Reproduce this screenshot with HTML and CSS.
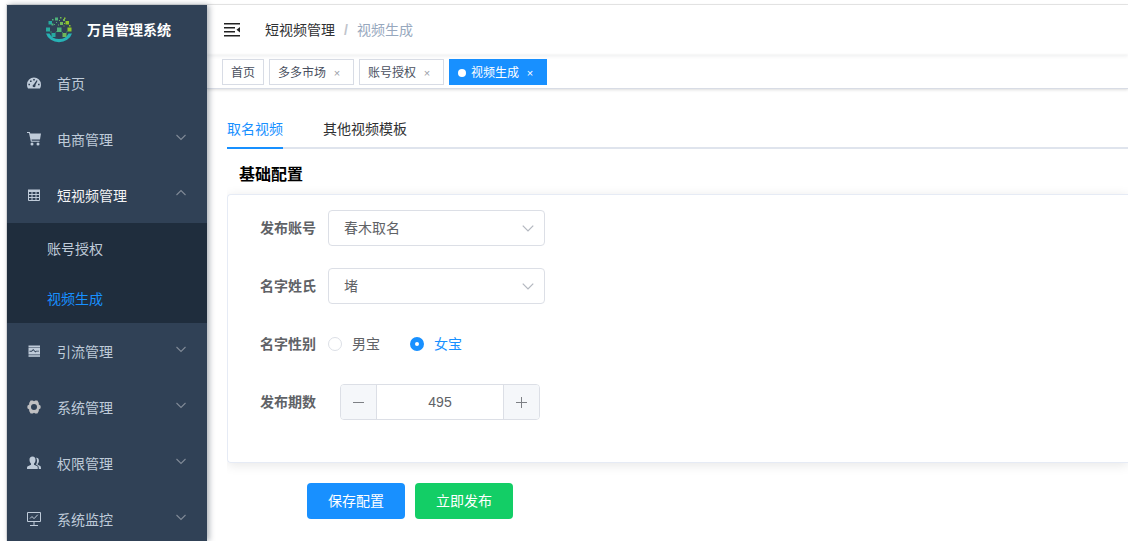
FILE: index.html
```html
<!DOCTYPE html>
<html lang="zh-CN">
<head>
<meta charset="utf-8">
<title>万自管理系统</title>
<link rel="stylesheet" href="styles.css">
</head>
<body>
<svg class="sprite" aria-hidden="true">
  <symbol id="chevron" viewBox="0 0 12 12"><path d="M1.500 4l4.500 4.500L10.500 4" fill="none" stroke="currentColor" stroke-width="1.100"/></symbol>
</svg>
<div class="app">
  <aside class="sidebar">
    <a class="brand" href="#">
      <svg class="brand-logo" viewBox="0 0 28 28" aria-hidden="true">
        <path d="M1 18.500h3.500A10.300 9 0 0 0 23.500 18.500H27A13.500 12 0 0 1 1 18.500z" transform="translate(0 -1)" fill="#27b2b5"/>
        <g fill="#27aaa0"><path d="M1 11.500h4v4H1zM3.500 5h3.500v3.500H3.500zM6.500 17h4v4h-4z"/></g>
        <g fill="#4fb37b"><path d="M12 11.500h4.500v4.500H12zM10 1.500h3v3h-3zM6.500 7.500h2v2h-2zM9 8h1v1H9zM11 6h1v1h-1zM7 3h1.500v1.500H7z"/></g>
        <g fill="#6fb75a"><path d="M17.500 17h4v4h-4zM15 6h3v3h-3zM15 1h1.500v1.500H15zM18 3h2v2h-2zM13 8.500h1v1h-1zM18.500 9.500h1v1h-1zM14 4h1v1h-1z"/></g>
        <g fill="#8fc52b"><path d="M22.500 11.500h4v4h-4zM20.500 5h3.500v3.500h-3.500zM19 1.500h1.500v1.500H19zM19 7h1v1h-1zM24 9h1.500v1.500H24z"/></g>
        <path d="M5 16h2M10.500 16.500L12 15M16.500 15.500l1.500 1.500M21 16.500l2-1.500" stroke="#39856f" fill="none"/>
      </svg>
      <span>万自管理系统</span>
    </a>
    <nav class="menu">
      <a class="menu-item" href="#">
        <svg class="menu-icon" viewBox="0 0 14 14"><path fill="currentColor" fill-rule="evenodd" d="M7 1.500a7 7 0 0 0-7 7c0 1.600.4 3 1.100 4h11.800c.7-1 1.100-2.400 1.100-4a7 7 0 0 0-7-7zM6.200 3h1.600v1.600H6.200zM3 4.500h1.600v1.600H3zM1.400 7.700H3v1.600H1.400zM11 7.700h1.600v1.600H11zM9.600 4.300l1 .5-2.200 4.300c.5 1-.1 2.100-1.300 2.100-1.600 0-2.100-2-.4-2.700z"/></svg>
        <span class="menu-text">首页</span>
      </a>
      <a class="menu-item" href="#">
        <svg class="menu-icon" viewBox="0 0 14 14"><path fill="currentColor" d="M0 0h2.800l.5 1.600H14l-1 5.900H4.500l.3 1.200h7.700v1H3.900L2 1H0z"/><circle cx="5" cy="12" r="1.500" fill="currentColor"/><circle cx="11" cy="12" r="1.500" fill="currentColor"/></svg>
        <span class="menu-text">电商管理</span>
        <svg class="menu-arrow"><use href="#chevron"/></svg>
      </a>
      <a class="menu-item is-open" href="#">
        <svg class="menu-icon" viewBox="0 0 14 14"><path fill="none" stroke="#bfcbd9" d="M1.500 2v10.500h11V2M2 6.500h10M2 9.500h10M5 4v8.500M9 4v8.500"/><path fill="#bfcbd9" d="M1 1.500h12v2.500H1z"/></svg>
        <span class="menu-text">短视频管理</span>
        <svg class="menu-arrow"><use href="#chevron"/></svg>
      </a>
      <div class="submenu">
        <a class="submenu-item" href="#">账号授权</a>
        <a class="submenu-item is-active" href="#">视频生成</a>
      </div>
      <a class="menu-item" href="#">
        <svg class="menu-icon" viewBox="0 0 14 14"><path fill="currentColor" d="M1.500 1.500H13v2H1.500z"/><path fill="currentColor" fill-rule="evenodd" d="M1.500 4H13v6.500H1.500zM2.500 7.800h2.300l1.400-1.600 2.200 2.200 1.100-.8H12V6.700H9.200l-.9.500-2.100-2.100-1.700 1.600h-2z"/><path fill="currentColor" d="M1.500 11.200H13v1.600H1.500z"/></svg>
        <span class="menu-text">引流管理</span>
        <svg class="menu-arrow"><use href="#chevron"/></svg>
      </a>
      <a class="menu-item" href="#">
        <svg class="menu-icon" viewBox="0 0 14 14"><path fill="#c0c0c2" fill-rule="evenodd" d="M3.600.5h2.200L7 1.300 8.200.5h2.200l1.400 2.400v1.500l1.800 1.300v2.600l-1.800 1.300v1.500l-1.400 2.400H8.200L7 12.700l-1.200.8H3.600l-1.400-2.400V9.600L.4 8.300V5.700l1.800-1.300V2.900zM7 4a3 3 0 1 0 0 6 3 3 0 0 0 0-6z"/></svg>
        <span class="menu-text">系统管理</span>
        <svg class="menu-arrow"><use href="#chevron"/></svg>
      </a>
      <a class="menu-item" href="#">
        <svg class="menu-icon" viewBox="0 0 14 14"><path fill="currentColor" d="M5.500.5C3.500.5 2.300 2 2.500 4c.1 1.700.7 2.800 1.500 3.500v1.200L.8 10.200C.2 10.500 0 11 0 13h10.800c0-2-.2-2.500-.9-2.900L7 8.700V7.500c.9-.7 1.500-1.800 1.500-3.500C8.700 2 7.500.5 5.500.5zM9 1.700c1.800-.2 3 1 2.900 3 0 1.400-.5 2.300-1.200 2.900v1.100l2.500 1.300c.6.400.8 1 .8 3h-2.200c0-2.400-.4-3.100-1.200-3.600L9 8.500c.5-1 1.100-2.200 1-4.100 0-1-.3-1.900-1-2.700z"/></svg>
        <span class="menu-text">权限管理</span>
        <svg class="menu-arrow"><use href="#chevron"/></svg>
      </a>
      <a class="menu-item" href="#">
        <svg class="menu-icon" viewBox="0 0 14 14"><path fill="none" stroke="currentColor" d="M.5.500h13v9H.5zM7 10v3M3 13.500h8M3 6.500l2-2 2 2.200 3.800-4"/></svg>
        <span class="menu-text">系统监控</span>
        <svg class="menu-arrow"><use href="#chevron"/></svg>
      </a>
    </nav>
  </aside>

  <div class="main">
    <header class="header">
      <div class="navbar">
        <button class="fold" type="button" aria-label="收起菜单">
          <svg viewBox="0 0 16 14"><path d="M0 0h16v1.500H0zM0 4h11v1.500H0zM0 8h11v1.500H0zM0 12h16v1.500H0zM16 4v5.500L12.500 6.800z" fill="#222"/></svg>
        </button>
        <nav class="breadcrumb">
          <a href="#">短视频管理</a><span class="slash">/</span><span class="current">视频生成</span>
        </nav>
      </div>
      <div class="tags">
        <a class="tag" href="#">首页</a>
        <a class="tag" href="#">多多市场<span class="close">×</span></a>
        <a class="tag" href="#">账号授权<span class="close">×</span></a>
        <a class="tag is-active" href="#">视频生成<span class="close">×</span></a>
      </div>
    </header>

    <main class="content">
      <div class="tabs" role="tablist">
        <button class="tab is-active" type="button" role="tab" aria-selected="true">取名视频</button>
        <button class="tab" type="button" role="tab" aria-selected="false">其他视频模板</button>
      </div>
      <form class="panel">
        <h2 class="section-title">基础配置</h2>
        <div class="card">
          <div class="row">
            <label class="label" for="account">发布账号</label>
            <div class="select">
              <select id="account"><option>春木取名</option></select>
              <svg class="select-arrow"><use href="#chevron"/></svg>
            </div>
          </div>
          <div class="row">
            <label class="label" for="surname">名字姓氏</label>
            <div class="select">
              <select id="surname"><option>堵</option></select>
              <svg class="select-arrow"><use href="#chevron"/></svg>
            </div>
          </div>
          <div class="row" role="radiogroup" aria-labelledby="gender">
            <span class="label" id="gender">名字性别</span>
            <div class="radios">
              <label class="radio"><input type="radio" name="gender"><span>男宝</span></label>
              <label class="radio"><input type="radio" name="gender" checked><span>女宝</span></label>
            </div>
          </div>
          <div class="row">
            <label class="label" for="issue">发布期数</label>
            <div class="stepper">
              <button type="button" aria-label="减少"><svg viewBox="0 0 13 13"><path d="M1 6.500h11" stroke="currentColor"/></svg></button>
              <input id="issue" type="text" inputmode="numeric" value="495">
              <button type="button" aria-label="增加"><svg viewBox="0 0 13 13"><path d="M1 6.500h11M6.500 1v11" stroke="currentColor"/></svg></button>
            </div>
          </div>
        </div>
        <div class="actions">
          <button class="btn btn-primary" type="button">保存配置</button>
          <button class="btn btn-success" type="button">立即发布</button>
        </div>
      </form>
    </main>
  </div>
</div>
</body>
</html>
```
FILE: styles.css
```css
* { box-sizing: border-box; }

body {
  margin: 0;
  padding: 4px 0 0 6px;
  height: 100vh;
  overflow: hidden;
  background: #fff;
  color: #303133;
  font: 14px/20px "Liberation Sans", "Noto Sans CJK SC", sans-serif;
}

a { color: inherit; text-decoration: none; }
button, input, select { font: inherit; margin: 0; padding: 0; }
button { cursor: pointer; }

.sprite { position: absolute; width: 0; height: 0; }

.app {
  display: flex;
  height: 100%;
  border-top: 1px solid #e6e6e6;
  border-left: 1px solid #e6e6e6;
}

/* Sidebar */
.sidebar {
  position: relative;
  z-index: 1;
  flex: 0 0 200px;
  overflow: hidden;
  background: #304156;
  color: #bfcbd9;
  box-shadow: 2px 0 6px rgba(0, 21, 41, .35);
}

.brand {
  display: flex;
  align-items: center;
  justify-content: center;
  gap: 14px;
  height: 50px;
  padding-left: 2px;
  color: #fff;
  font-weight: 700;
}
.brand-logo { width: 28px; height: 28px; }

.menu-item {
  display: flex;
  align-items: center;
  gap: 16px;
  height: 56px;
  padding: 0 20px;
}
.menu-icon { flex: none; width: 14px; height: 14px; }
.menu-text { flex: 1; padding-top: 2px; }
.menu-arrow { width: 12px; height: 12px; margin-bottom: 4px; color: #808a97; }
.is-open { color: #f4f4f5; }
.is-open .menu-arrow { transform: rotate(180deg); }

.submenu { background: #1f2d3d; }
.submenu-item {
  display: flex;
  align-items: center;
  height: 50px;
  padding: 2px 40px 0;
}
.submenu-item.is-active { color: #1890ff; }

/* Header */
.main { flex: 1; min-width: 0; }

.navbar {
  display: flex;
  align-items: center;
  gap: 25px;
  height: 50px;
  padding: 0 17px;
  box-shadow: 0 1px 4px rgba(0, 21, 41, .08);
}
.fold { display: flex; border: 0; background: none; }
.fold svg { width: 16px; height: 14px; }
.breadcrumb { display: flex; color: #97a8be; }
.breadcrumb a { color: #303133; }
.slash { margin: 0 9px; color: #c0c4cc; font-weight: 700; }

.tags {
  display: flex;
  gap: 5px;
  height: 34px;
  padding: 4px 15px 0;
  border-bottom: 1px solid #d8dce5;
  box-shadow: 0 1px 3px rgba(0, 0, 0, .12), 0 0 3px rgba(0, 0, 0, .04);
}
.tag {
  display: flex;
  align-items: center;
  height: 26px;
  padding: 2px 8px 0;
  border: 1px solid #d8dce5;
  color: #495060;
  font-size: 12px;
}
.close {
  width: 16px;
  margin-left: 3px;
  color: #9a9ea8;
  font-size: 11px;
  text-align: center;
}
.tag.is-active { border-color: #1890ff; background: #1890ff; color: #fff; }
.tag.is-active .close { color: #fff; }
.tag.is-active::before {
  content: "";
  width: 8px;
  height: 8px;
  margin-right: 5px;
  border-radius: 50%;
  background: #fff;
}

/* Content */
.content { padding: 20px 0 0 20px; }

.tabs { display: flex; gap: 40px; height: 40px; border-bottom: 2px solid #dfe4ed; }
.tab {
  height: 40px;
  padding-top: 2px;
  border: 0;
  border-bottom: 2px solid transparent;
  background: none;
  color: #303133;
}
.tab.is-active { border-color: #1890ff; color: #1890ff; }

.panel { overflow: hidden; }
.section-title {
  margin: 0;
  padding: 16px 12px 9px;
  color: #000;
  font-size: 16px;
  line-height: 20px;
}
.card {
  display: grid;
  gap: 22px;
  padding: 15px 20px 42px 32px;
  border: 1px solid #e6ebf5;
  border-right: 0;
  border-radius: 4px 0 0 4px;
  box-shadow: 0 2px 12px rgba(0, 0, 0, .1);
}
.row { display: flex; align-items: center; gap: 12px; height: 36px; }
.label { color: #606266; font-weight: 700; }

.select { display: grid; align-items: center; width: 217px; }
.select select,
.select-arrow { grid-area: 1 / 1; }
.select select {
  width: 100%;
  height: 36px;
  padding: 0 15px;
  border: 1px solid #dcdfe6;
  border-radius: 4px;
  background: #fff;
  color: #606266;
  appearance: none;
}
.select-arrow {
  justify-self: end;
  width: 14px;
  height: 14px;
  margin-right: 10px;
  color: #b4b8c0;
  pointer-events: none;
}

.radios { display: flex; gap: 30px; color: #606266; }
.radio { display: flex; align-items: center; gap: 10px; }
.radio input {
  width: 14px;
  height: 14px;
  border: 1px solid #dcdfe6;
  border-radius: 50%;
  background: #fff;
  appearance: none;
}
.radio input:checked { border: 5px solid #1890ff; }
.radio input:checked + span { color: #1890ff; }

.stepper {
  display: flex;
  width: 200px;
  height: 36px;
  margin-left: 12px;
  overflow: hidden;
  border: 1px solid #dcdfe6;
  border-radius: 4px;
}
.stepper button {
  display: flex;
  flex: 0 0 35px;
  align-items: center;
  justify-content: center;
  border: 0;
  background: #f5f7fa;
  color: #7d8085;
}
.stepper svg { width: 13px; height: 13px; }
.stepper input {
  flex: 1;
  min-width: 0;
  border: solid #dcdfe6;
  border-width: 0 1px;
  color: #606266;
  text-align: center;
}

.actions { display: flex; gap: 10px; padding: 20px 80px; }
.btn {
  height: 36px;
  padding: 0 21px;
  border: 0;
  border-radius: 4px;
  color: #fff;
}
.btn-primary { background: #1890ff; }
.btn-success { background: #13ce66; }
```
